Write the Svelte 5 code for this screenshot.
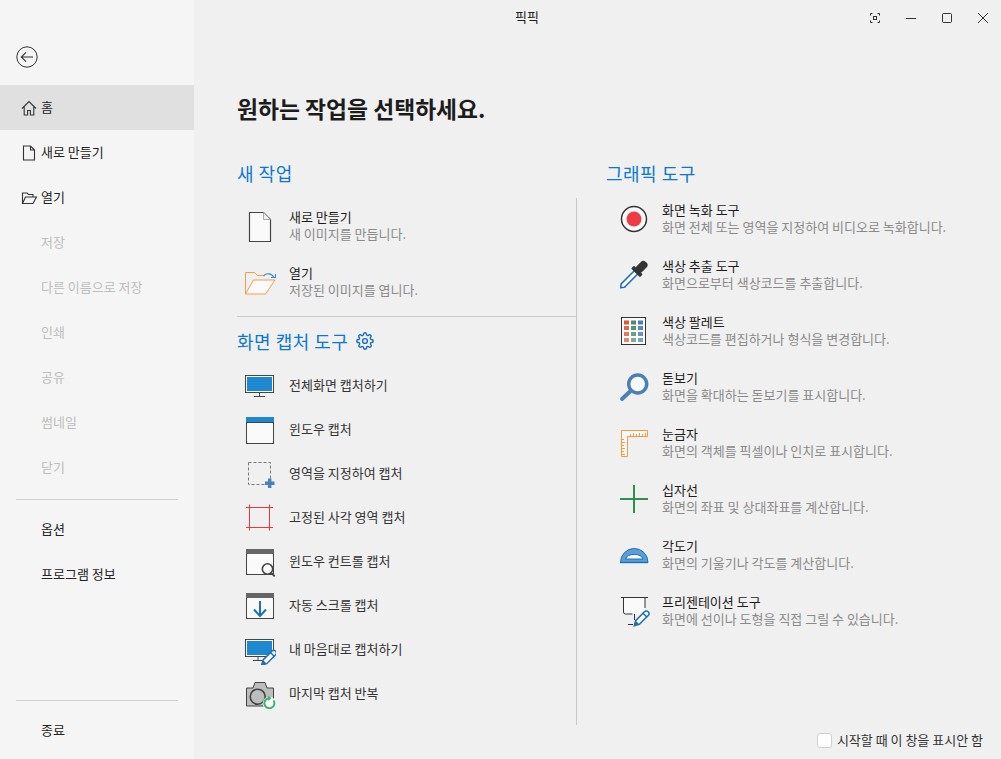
<script>
  const disabled = ['저장', '다른 이름으로 저장', '인쇄', '공유', '썸네일', '닫기'];

  const monitor = `<rect x="1.5" y="6.5" width="28" height="17" fill="#fafafa" stroke="#444"/><rect x="3" y="8" width="25" height="14" fill="#1e88d0"/>`;
  const bar = (c, top, bottom) => `<rect x="2.5" y="${top}.5" width="27" height="${bottom - top}" fill="#fafafa" stroke="#444"/><rect x="2" y="${top}" width="28" height="5" fill="${c}"/>`;
  const pencil = (x, y) => `<g transform="translate(${x} ${y}) rotate(45)"><path d="M0 0L-2.600 -4.500V-17a2.600 2.600 0 0 1 5.200 0V-4.500Z" fill="#fafafa" stroke="#1e6fb8" stroke-width="1.500"/><path d="M0 0L-2.600 -4.500H2.600Z" fill="#1e6fb8"/><path d="M-3 -15H3" stroke="#1e6fb8" stroke-width="1.500"/></g>`;

  const captures = [
    { label: '전체화면 캡처하기', svg: monitor + `<path d="M15.5 24v3.5M10 27.5h11" stroke="#444" fill="none"/>` },
    { label: '윈도우 캡처', svg: bar('#1e88d0', 4, 30) + `<path d="M2 9.5h28" stroke="#444"/>` },
    { label: '영역을 지정하여 캡처', svg: `<rect x="4.5" y="5.5" width="22" height="22" fill="none" stroke="#777" stroke-dasharray="3 2"/><path d="M25.7 21.5v9.5M21 26.3h9.5" stroke="#4a80b8" stroke-width="3.4"/>` },
    { label: '고정된 사각 영역 캡처', svg: `<path d="M5.5 3.5v26M25.5 3.5v26M2 6.5h27M2 26.5h27" stroke="#e8383d" fill="none"/>` },
    { label: '윈도우 컨트롤 캡처', svg: bar('#666', 4, 29) + `<circle cx="23.5" cy="24" r="5.2" fill="#fafafa" stroke="#444" stroke-width="1.6"/><path d="M27.3 27.8l3.4 3.6" stroke="#444" stroke-width="1.8"/>` },
    { label: '자동 스크롤 캡처', svg: bar('#666', 4, 29) + `<path d="M16 12v15M10 20.5l6 6.5 6-6.5" fill="none" stroke="#1e6fb8" stroke-width="2"/>` },
    { label: '내 마음대로 캡처하기', svg: monitor + `<path d="M14 24v3.5M9 27.5h9" stroke="#444" fill="none"/>` + pencil(17.7, 32) },
    { label: '마지막 캡처 반복', svg: `<path d="M2.5 11h6.5l2-5.5h10l2 5.5h6.5v18h-27z" fill="#bdbdbd" stroke="#444"/><circle cx="13.7" cy="19.7" r="7.5" fill="#bdbdbd" stroke="#444" stroke-width="1.6"/><circle cx="25.3" cy="26.3" r="6.6" fill="#fafafa"/><path d="M29.5 23.5a5 5 0 1 1-4.2-2.2" fill="none" stroke="#3cb371" stroke-width="2"/><path d="M24 18.5l3.5 2.8-3.5 2.6z" fill="#3cb371"/>` }
  ];

  const tools = [
    { title: '화면 녹화 도구', sub: '화면 전체 또는 영역을 지정하여 비디오로 녹화합니다.', svg: `<circle cx="16" cy="16" r="12.5" fill="#fafafa" stroke="#333" stroke-width="1.5"/><circle cx="16" cy="16" r="7.5" fill="#ee3b44"/>` },
    { title: '색상 추출 도구', sub: '화면으로부터 색상코드를 추출합니다.', svg: `<g transform="translate(2.700 28.700) rotate(45)"><path d="M0 0L-2.400 -3V-22H2.400V-3Z" fill="#fafafa" stroke="#1e6fb8" stroke-width="1.500"/><rect x="-6.200" y="-25" width="12.400" height="4" rx="1" fill="#333"/><rect x="-4" y="-36" width="8" height="13" rx="3.500" fill="#333"/></g>` },
    { title: '색상 팔레트', sub: '색상코드를 편집하거나 형식을 변경합니다.', svg: `<rect x="3.500" y="2.500" width="24" height="27" fill="#fafafa" stroke="#333"/><path d="M6 5.500h5v4H6z" fill="#d9573a"/><path d="M6 11h5v4H6z" fill="#dc6a4e"/><path d="M6 17h5v4H6z" fill="#de7b62"/><path d="M6 23h5v4H6z" fill="#e08a70"/><path d="M13 5.500h5v4h-5z" fill="#4f8a6f"/><path d="M13 11h5v4h-5z" fill="#58917a"/><path d="M13 17h5v4h-5z" fill="#68a08a"/><path d="M13 23h5v4h-5z" fill="#7aac98"/><path d="M20 5.500h5v4h-5z" fill="#4a80b8"/><path d="M20 11h5v4h-5z" fill="#5a8aba"/><path d="M20 17h5v4h-5z" fill="#6a94be"/><path d="M20 23h5v4h-5z" fill="#7ba0c4"/>` },
    { title: '돋보기', sub: '화면을 확대하는 돋보기를 표시합니다.', svg: `<circle cx="19.700" cy="13" r="9" fill="#fafafa" stroke="#4a80b8" stroke-width="3.500"/><path d="M12 20.500l-8 7.500" stroke="#4a80b8" stroke-width="4" stroke-linecap="round"/>` },
    { title: '눈금자', sub: '화면의 객체를 픽셀이나 인치로 표시합니다.', svg: `<path d="M3.500 3.500h26v6h-20v20h-6z" fill="#fafafa" stroke="#f7993f"/><path d="M12.500 9v-2M15.500 9v-3M18.500 9v-2M21.500 9v-3M24.500 9v-2M27.500 9v-3M4 12.500h2M4 15.500h3M4 18.500h2M4 21.500h3M4 24.500h2M4 27.500h3" stroke="#f7993f"/>` },
    { title: '십자선', sub: '화면의 좌표 및 상대좌표를 계산합니다.', svg: `<path d="M16 2v28M2 16h28" stroke="#2f8f4f" stroke-width="2"/>` },
    { title: '각도기', sub: '화면의 기울기나 각도를 계산합니다.', svg: `<path d="M2.500 23.500a13.700 14 0 0 1 27.500 0z" fill="#5a9fd8" stroke="#1d6fb8"/><path d="M7.500 20a9 6 0 0 1 17.500 0z" fill="#fafafa" stroke="#1d6fb8"/><path d="M2 23.500h28" stroke="#1d6fb8" stroke-width="1.400"/>` },
    { title: '프리젠테이션 도구', sub: '화면에 선이나 도형을 직접 그릴 수 있습니다.', svg: `<path d="M5.500 3v14a2 2 0 0 0 2 2h19.500V3z" fill="#fafafa"/><path d="M5.500 3v14a2 2 0 0 0 2 2h7M27 3v10" fill="none" stroke="#333"/><path d="M3 2.500h27M16.500 19v6M10 29.500h5" fill="none" stroke="#333"/>` + pencil(16.3, 30.7) }
  ];
</script>

<div class="page">
  <aside class="side">
    <div class="back">
      <svg width="22" height="22" viewBox="0 0 22 22" fill="none" stroke="#333">
        <circle cx="11" cy="11" r="10.200"/>
        <path d="M17 11H5.500M10 6.300L5.300 11l4.700 4.700" stroke-width="1.100"/>
      </svg>
    </div>
    <div class="item on">
      <svg class="ic" width="16" height="16" viewBox="0 0 16 16" fill="none" stroke="#333" stroke-width="1.100">
        <path d="M1 8.500L8 1.500l7 7M3.200 6.800V15h3.400v-4.500h2.800V15h3.400V6.800"/>
      </svg>
      <span>홈</span>
    </div>
    <div class="item">
      <svg class="ic" width="16" height="16" viewBox="0 0 16 16" fill="none" stroke="#333" stroke-width="1.100">
        <path d="M2.500 1h7l4 4v10h-11zM9.500 1v4h4"/>
      </svg>
      <span>새로 만들기</span>
    </div>
    <div class="item">
      <svg class="ic" width="16" height="16" viewBox="0 0 16 16" fill="none" stroke="#333" stroke-width="1.100">
        <path d="M1.500 13.500V3h4.500l1.500 1.500h4.500v2.500M1.500 13.500l3-6.500h11l-3.500 6.500z"/>
      </svg>
      <span>열기</span>
    </div>
    {#each disabled as label}
      <div class="item off"><i class="ic"></i><span>{label}</span></div>
    {/each}
    <hr class="rule first" />
    <div class="item"><i class="ic"></i><span>옵션</span></div>
    <div class="item"><i class="ic"></i><span>프로그램 정보</span></div>
    <div class="grow"></div>
    <hr class="rule last" />
    <div class="item"><i class="ic"></i><span>종료</span></div>
  </aside>

  <main class="main">
    <header class="bar">
      <span class="wintitle">픽픽</span>
      <div class="btns">
        <span class="btn">
          <svg width="12" height="12" viewBox="0 0 12 12" fill="none" stroke="#333">
            <path d="M1.500 3.500v-2h2M8.500 1.500h2v2M10.500 8.500v2h-2M3.500 10.500h-2v-2"/>
            <rect x="4.500" y="4.500" width="3" height="3"/>
          </svg>
        </span>
        <span class="btn">
          <svg width="12" height="12" viewBox="0 0 12 12" fill="none" stroke="#333"><path d="M1 6.500h10"/></svg>
        </span>
        <span class="btn">
          <svg width="12" height="12" viewBox="0 0 12 12" fill="none" stroke="#333"><rect x="1.500" y="1.500" width="9" height="9" rx="1"/></svg>
        </span>
        <span class="btn">
          <svg width="12" height="12" viewBox="0 0 12 12" fill="none" stroke="#333"><path d="M1 1l10 10M11 1L1 11"/></svg>
        </span>
      </div>
    </header>

    <h1 class="headline">원하는 작업을 선택하세요.</h1>

    <div class="cols">
      <h2 class="sec">새 작업</h2>
      <h2 class="sec right">그래픽 도구</h2>

      <section class="left">
        <div class="row tall">
          <svg class="big" width="32" height="32" viewBox="0 0 32 32">
            <path d="M5.500 2.500h14l7 7v22h-21z" fill="#fafafa" stroke="#444" stroke-width="1.200"/>
            <path d="M19.500 2.500v7h7" fill="#efefef" stroke="#aaa"/>
          </svg>
          <div class="txt"><b>새로 만들기</b><small>새 이미지를 만듭니다.</small></div>
        </div>
        <div class="row tall">
          <svg class="big" width="32" height="32" viewBox="0 0 32 32" fill="none">
            <path d="M1.500 28V6.500h9l3 3h6" stroke="#f79a45"/>
            <path d="M1.500 28l8-14h21.500l-9.500 14z" fill="#fafafa" stroke="#f79a45"/>
            <path d="M19.500 10a6 6 0 0 1 10 1" stroke="#3a8bd0" stroke-width="1.200"/>
            <path d="M27 11.500h4.500V8" stroke="#3a8bd0" stroke-width="1.200"/>
          </svg>
          <div class="txt"><b>열기</b><small>저장된 이미지를 엽니다.</small></div>
        </div>
        <hr class="split" />
        <h2 class="sec sub">
          화면 캡처 도구
          <svg width="18" height="18" viewBox="0 0 24 24" fill="none" stroke="#1a6fc0" stroke-width="1.900">
            <circle cx="12" cy="12" r="3.200"/>
            <path d="M19.400 15a1.650 1.650 0 0 0 .33 1.820l.06.06a2 2 0 1 1-2.830 2.830l-.06-.06a1.650 1.650 0 0 0-2.800 1.170V21a2 2 0 1 1-4 0v-.09a1.650 1.650 0 0 0-2.800-1.170l-.06.06a2 2 0 1 1-2.830-2.830l.06-.06a1.650 1.650 0 0 0-1.170-2.800H3a2 2 0 1 1 0-4h.09a1.650 1.650 0 0 0 1.170-2.800l-.06-.06a2 2 0 1 1 2.830-2.830l.06.06a1.650 1.650 0 0 0 2.800-1.170V3a2 2 0 1 1 4 0v.09a1.650 1.650 0 0 0 2.800 1.170l.06-.06a2 2 0 1 1 2.830 2.830l-.06.06a1.650 1.650 0 0 0 1.170 2.800H21a2 2 0 1 1 0 4h-.09a1.650 1.650 0 0 0-1.510 1z"/>
          </svg>
        </h2>
        {#each captures as c}
          <div class="row cap">
            <svg class="big" width="32" height="32" viewBox="0 0 32 32">{@html c.svg}</svg>
            <span class="captxt">{c.label}</span>
          </div>
        {/each}
      </section>

      <section class="tools">
        {#each tools as t}
          <div class="tool">
            <svg width="32" height="32" viewBox="0 0 32 32">{@html t.svg}</svg>
            <div class="txt"><b>{t.title}</b><small>{t.sub}</small></div>
          </div>
        {/each}
      </section>
    </div>

    <label class="foot">
      <span class="box"></span>
      <span class="foottxt">시작할 때 이 창을 표시안 함</span>
    </label>
  </main>
</div>

<style>
  :global(body) {
    margin: 0;
    overflow: hidden;
    font-family: "Noto Sans CJK KR", "Noto Sans", sans-serif;
    font-size: 13px;
    color: #222;
  }
  .page {
    display: flex;
    width: 1001px;
    height: 759px;
    background: #f0f0f0;
  }
  .side {
    width: 194px;
    flex: none;
    display: flex;
    flex-direction: column;
    background: #f5f5f5;
    padding-bottom: 6px;
    box-sizing: border-box;
  }
  .back {
    height: 85px;
    flex: none;
    display: flex;
    align-items: flex-start;
    padding: 46px 0 0 16px;
    box-sizing: border-box;
  }
  .item {
    height: 45px;
    flex: none;
    display: flex;
    align-items: center;
    gap: 4px;
    padding-left: 21px;
    line-height: 18px;
  }
  .item span { margin-bottom: 2px; }
  .item.on { background: #e0e0e0; }
  .item.off { color: #bdbdbd; }
  .ic {
    width: 16px;
    height: 16px;
    flex: none;
    display: block;
  }
  .rule {
    border: 0;
    border-top: 1px solid #cfcfcf;
    margin: 0 16px;
    flex: none;
  }
  .rule.first { margin-top: 9px; margin-bottom: 7px; }
  .rule.last { margin-bottom: 7px; }
  .grow { flex: 1; }
  .main {
    flex: 1;
    display: flex;
    flex-direction: column;
    min-width: 0;
  }
  .bar {
    height: 36px;
    flex: none;
    display: flex;
    align-items: center;
    justify-content: space-between;
  }
  .wintitle {
    margin-left: 321px;
    font-size: 13px;
    margin-bottom: 4px;
  }
  .btns { display: flex; }
  .btn {
    width: 36px;
    height: 36px;
    display: flex;
    align-items: center;
    justify-content: center;
  }
  .headline {
    margin: 58px 0 2px 43px;
    font-size: 22.800px;
    line-height: 30px;
    font-weight: 700;
    color: #1c1c1c;
    flex: none;
  }
  .cols {
    display: grid;
    grid-template-columns: 340px 1fr;
    grid-template-rows: 36px 527px;
    margin: 36px 0 0 43px;
    flex: none;
  }
  .sec {
    margin: 0;
    font-size: 18px;
    letter-spacing: 0.500px;
    line-height: 24px;
    font-weight: 400;
    color: #0a78d2;
    margin-top: -1px;
  }
  .sec.right { padding-left: 29px; }
  .sec.sub {
    height: 46px;
    box-sizing: border-box;
    padding-top: 12px;
    display: flex;
    gap: 8px;
    align-items: flex-start;
    margin-top: 0;
  }
  .sec.sub svg { margin-top: 3px; }
  .left {
    border-right: 1px solid #c8c8c8;
    box-sizing: border-box;
  }
  .row {
    display: flex;
    align-items: center;
    margin-left: 7px;
  }
  .row.tall { height: 56px; gap: 13px; }
  .row.cap { height: 44px; gap: 13px; }
  .big { flex: none; display: block; }
  .txt {
    display: flex;
    flex-direction: column;
    line-height: 17px;
  }
  .row .txt { margin-bottom: 2px; }
  .tool .txt { margin-top: -2px; }
  .txt b { font-weight: 400; color: #1c1c1c; }
  .txt small { font-size: 13px; color: #8a8a8a; }
  .captxt { color: #333; margin-bottom: 1px; }
  .split {
    border: 0;
    border-top: 1px solid #c8c8c8;
    margin: 6px 0 0;
  }
  .tools { padding-left: 29px; }
  .tool {
    height: 56px;
    box-sizing: border-box;
    padding: 5px 0 0 12px;
    display: flex;
    align-items: flex-start;
    gap: 12px;
  }
  .tool svg { flex: none; }
  .foot {
    display: flex;
    align-items: center;
    justify-content: flex-end;
    gap: 5px;
    margin: 8px 18px 0 0;
    height: 15px;
    color: #333;
  }
  .foottxt { margin-bottom: 2px; }
  .box {
    width: 13px;
    height: 13px;
    background: #fff;
    border: 1px solid #cfcfcf;
    border-radius: 3px;
  }
</style>
